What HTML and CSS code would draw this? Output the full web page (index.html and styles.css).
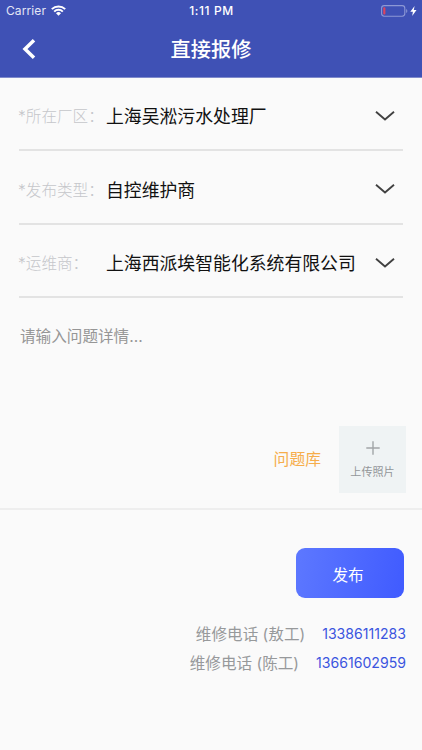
FILE: index.html
```html
<!DOCTYPE html>
<html lang="zh-CN">
<head>
<meta charset="utf-8">
<title>直接报修</title>
<link rel="stylesheet" href="styles.css">
</head>
<body>
<header class="header">
  <div class="status">
    <div class="status-left">
      <span class="carrier">Carrier</span>
      <svg class="wifi" width="15" height="11" viewBox="0 0 15 11" fill="none" stroke="#fff" stroke-width="2"><path d="M.8 4.1a9.6 9.6 0 0 1 13.4 0M3.2 6.6a6.1 6.1 0 0 1 8.6 0"/><path d="M7.5 10.8 5 8.3a3.6 3.6 0 0 1 5 0z" fill="#fff" stroke="none"/></svg>
    </div>
    <span class="time">1:11 PM</span>
    <div class="status-right">
      <svg width="36" height="12" viewBox="0 0 36 12"><rect x=".6" y=".6" width="23.2" height="10.6" rx="2.6" fill="none" stroke="#8d98d5" stroke-width="1.1"/><path d="M25.2 4v4c1.5-.5 1.5-3.5 0-4z" fill="#8d98d5"/><rect x="2.2" y="2.2" width="2.2" height="7.4" rx=".8" fill="#db4460"/><path d="M33.6 1 29.3 6.7h2.6L31.2 11l4.3-5.9h-2.7z" fill="#fff"/></svg>
    </div>
  </div>
  <div class="nav">
    <svg class="back" width="14" height="22" viewBox="0 0 14 22" fill="none" stroke="#fff" stroke-width="3.5"><path d="M12 2.2 3 11l9 8.8"/></svg>
    <h1 class="title">直接报修</h1>
  </div>
</header>
<main>
  <section class="fields">
    <div class="field"><span class="label">*所在厂区：</span><span class="value">上海吴淞污水处理厂</span><svg class="chevron" width="20" height="12" viewBox="0 0 20 12"><path d="M1 1.8 10 9.4l9-7.6"/></svg></div>
    <div class="field"><span class="label">*发布类型：</span><span class="value">自控维护商</span><svg class="chevron" width="20" height="12" viewBox="0 0 20 12"><path d="M1 1.8 10 9.4l9-7.6"/></svg></div>
    <div class="field"><span class="label">*运维商：</span><span class="value">上海西派埃智能化系统有限公司</span><svg class="chevron" width="20" height="12" viewBox="0 0 20 12"><path d="M1 1.8 10 9.4l9-7.6"/></svg></div>
  </section>
  <section class="details">
    <p class="placeholder">请输入问题详情...</p>
    <div class="tools">
      <span class="library">问题库</span>
      <div class="upload">
        <svg width="14" height="14" viewBox="0 0 14 14" stroke="#a2a5a7" stroke-width="1.4"><path d="M7 .3v13.4M.3 7h13.4"/></svg>
        <span>上传照片</span>
      </div>
    </div>
  </section>
  <section class="actions">
    <button class="submit">发布</button>
    <div class="phone"><span>维修电话 (敖工)</span><span class="number">13386111283</span></div>
    <div class="phone"><span>维修电话 (陈工)</span><span class="number">13661602959</span></div>
  </section>
</main>
</body>
</html>
```
FILE: styles.css
```css
* { box-sizing: border-box; }
body {
  margin: 0;
  width: 422px;
  height: 750px;
  overflow: hidden;
  background: #fafafa;
  font-family: Inter, "Noto Sans CJK SC", sans-serif;
  color: #111;
}
svg { display: block; flex: none; }
.header { height: 78px; background: #3f51b5; border-bottom: 1px solid #7f8acb; color: #fff; }
.status {
  display: grid;
  grid-template-columns: 1fr auto 1fr;
  align-items: center;
  height: 22px;
  padding: 0 5px 0 6px;
  line-height: 22px;
}
.status-left { display: flex; align-items: center; gap: 5px; }
.status-right { display: flex; justify-content: flex-end; }
.carrier { font-size: 12px; letter-spacing: .1px; color: #e3e6f5; }
.wifi { margin-top: -1px; }
.time { font-size: 12px; font-weight: 500; letter-spacing: .6px; }
.nav {
  display: grid;
  grid-template-columns: 60px 1fr 60px;
  align-items: center;
  height: 55px;
}
.back { margin: -1px 0 0 22px; }
.title { margin: 0; text-align: center; font-size: 20.2px; line-height: 30px; font-weight: 500; }
.fields { padding: 0 19px; }
.field {
  display: flex;
  align-items: center;
  height: 73.5px;
  padding: 4px 8px 0 0;
  border-bottom: 2px solid #e3e3e3;
}
.field:first-child { height: 73px; padding-top: 3px; }
.label { width: 88px; margin-left: -1px; flex: none; white-space: nowrap; font-size: 15.6px; font-weight: 300; color: #c5c6ca; }
.value { flex: 1; white-space: nowrap; font-size: 17.85px; }
.chevron { margin-top: 1px; fill: none; stroke: #414141; stroke-width: 1.9; }
.details { height: 211.5px; padding: 27px 16px 0 20px; border-bottom: 2px solid #eee; }
.placeholder { margin: 0; height: 101px; font-size: 15.6px; line-height: 24px; color: #969696; }
.tools { display: flex; justify-content: flex-end; align-items: center; gap: 18px; }
.library { margin-top: -2px; font-size: 15.8px; color: #f6ad4b; }
.upload {
  display: flex;
  flex-direction: column;
  align-items: center;
  gap: 8px;
  width: 67px;
  height: 67px;
  padding-top: 15px;
  background: #eff3f4;
  color: #939699;
  font-size: 11.1px;
  line-height: 18px;
}
.actions { display: flex; flex-direction: column; align-items: flex-end; padding: 38.5px 16px 0; }
.submit {
  width: 108px;
  height: 50px;
  margin: 0 2px 20px 0;
  padding: 2px 4px 0 0;
  border: 0;
  border-radius: 9px;
  background: linear-gradient(100deg, #5d78ff, #405bff);
  color: #fff;
  font: 15.6px "Noto Sans CJK SC", sans-serif;
}
.phone { display: flex; align-items: center; gap: 17px; height: 29.5px; font-size: 15.6px; color: #97999b; white-space: nowrap; }
.number { margin-top: 1px; font-size: 14.1px; color: #3a55df; }
```
